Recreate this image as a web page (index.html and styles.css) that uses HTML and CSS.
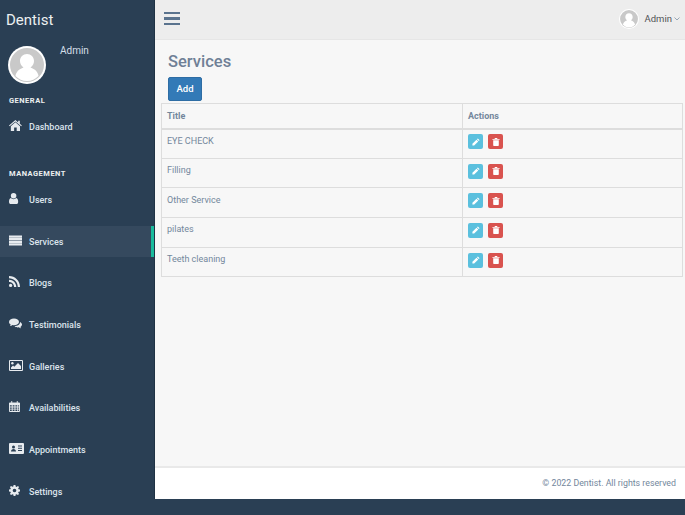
FILE: index.html
```html
<!DOCTYPE html>
<html lang="en">

<head>
    <meta charset="UTF-8">
    <title>Services</title>
    <link rel="stylesheet" href="styles.css">
</head>

<body>
    <svg class="defs" width="0" height="0">
        <symbol id="i-avatar" viewBox="0 0 38 38">
            <circle cx="19" cy="19" r="19" fill="#fff" />
            <circle cx="19" cy="19" r="17" fill="#c9c9c9" />
            <path fill="#fff" d="M19 8c-4 0-7 3-7 7 0 3 1.500 5 3.500 6.500C11 23 8 26 7.500 30 10.500 33 14.500 35 19 35s8.500-2 11.500-5C30 26 27 23 22.500 21.500 24.500 20 26 18 26 15c0-4-3-7-7-7z" />
        </symbol>
        <symbol id="i-home" viewBox="0 0 14 12" preserveAspectRatio="xMinYMid meet">
            <path d="M7 0 0 6l.7.8L7 1.500l6.300 5.300L14 6l-2.200-1.900V.7h-1.800v1.900z" />
            <path d="M7 2.500 2 6.700V12h3.600V8.300h2.800V12H12V6.700z" />
        </symbol>
        <symbol id="i-user" viewBox="0 0 10 12" preserveAspectRatio="xMinYMid meet">
            <circle cx="5" cy="3" r="3" />
            <path d="M2 5.500C.7 6 0 7.500 0 9.500 0 11 .8 12 2 12h6c1.200 0 2-1 2-2.500 0-2-.7-3.500-2-4-.8.800-1.800 1.200-3 1.200S2.800 6.300 2 5.500z" />
        </symbol>
        <symbol id="i-bars" viewBox="0 -.5 13 11" preserveAspectRatio="xMinYMid meet">
            <path d="M0 0h13v2.200H0zM0 2.600h13v2.200H0zM0 5.200h13v2.200H0zM0 7.800h13V10H0z" />
        </symbol>
        <symbol id="i-rss" viewBox="0 0 11 11" preserveAspectRatio="xMinYMid meet">
            <circle cx="1.600" cy="9.400" r="1.600" />
            <path d="M0 3.700v2.200c2.900 0 5.100 2.200 5.100 5.100h2.200C7.300 6.900 4.100 3.700 0 3.700z" />
            <path d="M0 0v2.200c4.900 0 8.800 3.900 8.800 8.800H11C11 4.900 6.100 0 0 0z" />
        </symbol>
        <symbol id="i-comments" viewBox="0 -.5 13 11" preserveAspectRatio="xMinYMid meet">
            <path d="M5 0C2.200 0 0 1.500 0 3.400c0 1.100.7 2 1.800 2.700-.2.600-.5 1-.9 1.400 1 0 1.900-.4 2.600-1 .5.100 1 .2 1.500.2 2.800 0 5-1.500 5-3.300S7.800 0 5 0z" />
            <path d="M11 3.500c.1 2.500-2.500 4.100-5.500 4.200.8.800 2 1.200 3.300 1.200.4 0 .8 0 1.100-.1.600.6 1.400.9 2.300 1-.4-.4-.6-.8-.8-1.300.9-.6 1.600-1.400 1.600-2.400 0-1-.8-2-2-2.600z" />
        </symbol>
        <symbol id="i-picture" viewBox="0 0 14 11" preserveAspectRatio="xMinYMid meet">
            <path fill-rule="evenodd" d="M1 0h12a1 1 0 0 1 1 1v9a1 1 0 0 1-1 1H1a1 1 0 0 1-1-1V1a1 1 0 0 1 1-1zm0 1v9h12V1z" />
            <circle cx="3.400" cy="3.200" r="1.200" />
            <path d="M2 9V7.500l2-2 1.300 1.300L9 3l3 3v3z" />
        </symbol>
        <symbol id="i-calendar" viewBox="0 0 12 12" preserveAspectRatio="xMinYMid meet">
            <path fill-rule="evenodd" d="M2.500 0h1v1.500h5V0h1v1.500H11a1 1 0 0 1 1 1V11a1 1 0 0 1-1 1H1a1 1 0 0 1-1-1V2.500a1 1 0 0 1 1-1h1.500zM1 4.500V6h2V4.500zm3 0V6h2V4.500zm3 0V6h2V4.500zm3 0V6h1V4.500zM1 7v1.400h2V7zm3 0v1.400h2V7zm3 0v1.400h2V7zm3 0v1.400h1V7zM1 9.300V11h2V9.300zm3 0V11h2V9.300zm3 0V11h2V9.300zm3 0V11h1V9.300z" />
        </symbol>
        <symbol id="i-card" viewBox="0 0 15 11" preserveAspectRatio="xMinYMid meet">
            <path fill-rule="evenodd" d="M1 0h13a1 1 0 0 1 1 1v9a1 1 0 0 1-1 1H1a1 1 0 0 1-1-1V1a1 1 0 0 1 1-1zm8 2.500v1h4v-1zm0 2.300v1h4v-1zm0 2.300v1h4v-1zM4.500 2.500a1.500 1.500 0 1 0 0 3 1.500 1.500 0 0 0 0-3zM2 8.500h5c0-1.500-1.100-2.500-2.500-2.500S2 7 2 8.500z" />
        </symbol>
        <symbol id="i-cog" viewBox="0 0 12 12" preserveAspectRatio="xMinYMid meet">
            <path fill-rule="evenodd" d="M5 0h2l.3 1.700 1 .4L9.700 1 11 2.300 10 3.700l.4 1L12 5v2l-1.600.3-.4 1 1 1.400L9.700 11l-1.400-1-1 .4L7 12H5l-.3-1.600-1-.4-1.400 1L1 9.700 2 8.300l-.4-1L0 7V5l1.600-.3.4-1L1 2.300 2.300 1l1.400 1 1-.4zM6 4a2 2 0 1 0 0 4 2 2 0 0 0 0-4z" />
        </symbol>
        <symbol id="i-pencil" viewBox="0 0 10 10">
            <path d="M7.300.5 9.500 2.700 8.400 3.800 6.200 1.600zM5.600 2.200 7.800 4.400 2.700 9.500H.5V7.300z" />
        </symbol>
        <symbol id="i-trash" viewBox="0 0 9 10">
            <path d="M3.200 0h2.600l.6 1.200H9v1H0v-1h2.600z" />
            <path d="M1 2.800h7V9a1 1 0 0 1-1 1H2a1 1 0 0 1-1-1z" />
        </symbol>
    </svg>

    <div class="page">
        <aside class="sidebar">
            <div class="brand">Dentist</div>
            <div class="profile">
                <svg class="profile-pic"><use href="#i-avatar" /></svg>
                <span class="profile-name">Admin</span>
            </div>

            <h3 class="menu-title">General</h3>
            <ul class="menu">
                <li class="menu-item"><svg class="menu-icon"><use href="#i-home" /></svg>Dashboard</li>
            </ul>

            <h3 class="menu-title menu-title-second">Management</h3>
            <ul class="menu">
                <li class="menu-item"><svg class="menu-icon"><use href="#i-user" /></svg>Users</li>
                <li class="menu-item active"><svg class="menu-icon"><use href="#i-bars" /></svg>Services</li>
                <li class="menu-item"><svg class="menu-icon"><use href="#i-rss" /></svg>Blogs</li>
                <li class="menu-item"><svg class="menu-icon"><use href="#i-comments" /></svg>Testimonials</li>
                <li class="menu-item"><svg class="menu-icon"><use href="#i-picture" /></svg>Galleries</li>
                <li class="menu-item"><svg class="menu-icon"><use href="#i-calendar" /></svg>Availabilities</li>
                <li class="menu-item"><svg class="menu-icon"><use href="#i-card" /></svg>Appointments</li>
                <li class="menu-item"><svg class="menu-icon"><use href="#i-cog" /></svg>Settings</li>
            </ul>
        </aside>

        <div class="main">
            <header class="topbar">
                <div class="toggle">
                    <span></span>
                    <span></span>
                    <span></span>
                </div>
                <div class="user-menu">
                    <svg class="user-pic"><use href="#i-avatar" /></svg>
                    <span>Admin</span>
                    <svg class="caret" viewBox="0 0 6 4"><path d="M.5.500 3 3 5.500.5" /></svg>
                </div>
            </header>

            <main class="content">
                <h1 class="page-title">Services</h1>
                <a class="btn-add" href="javascript:;">Add</a>
                <table class="table">
                    <thead>
                        <tr>
                            <th class="col-title">Title</th>
                            <th>Actions</th>
                        </tr>
                    </thead>
                    <tbody>
                        <tr>
                            <td>EYE CHECK</td>
                            <td class="actions">
                                <a class="btn-icon btn-edit" href="javascript:;"><svg><use href="#i-pencil" /></svg></a>
                                <a class="btn-icon btn-delete" href="javascript:;"><svg><use href="#i-trash" /></svg></a>
                            </td>
                        </tr>
                        <tr>
                            <td>Filling</td>
                            <td class="actions">
                                <a class="btn-icon btn-edit" href="javascript:;"><svg><use href="#i-pencil" /></svg></a>
                                <a class="btn-icon btn-delete" href="javascript:;"><svg><use href="#i-trash" /></svg></a>
                            </td>
                        </tr>
                        <tr>
                            <td>Other Service</td>
                            <td class="actions">
                                <a class="btn-icon btn-edit" href="javascript:;"><svg><use href="#i-pencil" /></svg></a>
                                <a class="btn-icon btn-delete" href="javascript:;"><svg><use href="#i-trash" /></svg></a>
                            </td>
                        </tr>
                        <tr>
                            <td>pilates</td>
                            <td class="actions">
                                <a class="btn-icon btn-edit" href="javascript:;"><svg><use href="#i-pencil" /></svg></a>
                                <a class="btn-icon btn-delete" href="javascript:;"><svg><use href="#i-trash" /></svg></a>
                            </td>
                        </tr>
                        <tr>
                            <td>Teeth cleaning</td>
                            <td class="actions">
                                <a class="btn-icon btn-edit" href="javascript:;"><svg><use href="#i-pencil" /></svg></a>
                                <a class="btn-icon btn-delete" href="javascript:;"><svg><use href="#i-trash" /></svg></a>
                            </td>
                        </tr>
                    </tbody>
                </table>
            </main>

            <footer class="footer">© 2022 Dentist. All rights reserved</footer>
        </div>
    </div>
</body>

</html>
```

FILE: styles.css
```css
* {
    margin: 0;
    padding: 0;
    box-sizing: border-box;
}

html,
body {
    height: 515px;
    overflow: hidden;
}

body {
    background-color: #2a3f54;
    font-family: Roboto, "Liberation Sans", sans-serif;
    font-size: 10px;
    color: #73879c;
}

a {
    text-decoration: none;
}

ul {
    list-style: none;
}

.defs {
    position: absolute;
}

.page {
    display: flex;
    height: 515px;
}

/* 侧边栏 */
.sidebar {
    width: 154px;
    flex-shrink: 0;
    padding-top: 11px;
    color: #ecf0f1;
}

.brand {
    padding-left: 6px;
    height: 35px;
    font-size: 15px;
    line-height: 18px;
}

.profile {
    display: flex;
    padding-left: 8px;
    height: 48px;
}

.profile-pic {
    width: 38px;
    height: 38px;
}

.profile-name {
    margin: -2px 0 0 14px;
    font-size: 10px;
    line-height: 14px;
    color: #d5dfe9;
}

.menu-title {
    padding-left: 9px;
    height: 14px;
    font-size: 7.500px;
    line-height: 14px;
    font-weight: 700;
    letter-spacing: .5px;
    text-transform: uppercase;
}

.menu-title-second {
    margin-top: 25px;
}

.menu {
    margin-top: 3px;
}

.menu-item {
    display: flex;
    align-items: center;
    height: 31px;
    margin-bottom: 10.700px;
    padding: 1px 0 0 9px;
    font-size: 9px;
    font-weight: 500;
    color: #dce4ec;
}

.menu-icon {
    width: 15px;
    height: 11px;
    margin: -3px 5px 0 0;
    fill: #e7ebef;
}

.active {
    background-color: #35495e;
    border-right: 3px solid #1abb9c;
}

/* 顶部栏 */
.main {
    flex: 1;
    display: flex;
    flex-direction: column;
    height: 499px;
    min-width: 0;
    background-color: #f7f7f7;
    border-left: 1px solid #1f3244;
}

.topbar {
    display: flex;
    align-items: center;
    justify-content: space-between;
    height: 40px;
    padding: 0 5px 2px 9px;
    background-color: #ededed;
    border-bottom: 1px solid #e6e6e6;
}

.toggle {
    display: flex;
    flex-direction: column;
    gap: 3px;
    width: 16px;
}

.toggle span {
    height: 2.500px;
    background-color: #5a738e;
}

.user-menu {
    display: flex;
    align-items: center;
    font-size: 9.500px;
    color: #515356;
}

.user-pic {
    width: 20px;
    height: 20px;
    margin-right: 6px;
}

.caret {
    width: 6px;
    height: 4px;
    margin-left: 2px;
    fill: none;
    stroke: #73879c;
    stroke-width: .7;
}

/* 内容区 */
.content {
    flex: 1;
    padding: 12px 2px 0 6px;
}

.page-title {
    margin-left: 7px;
    height: 25px;
    font-size: 16.500px;
    line-height: 20px;
    font-weight: 500;
    color: #6f8096;
}

.btn-add {
    display: block;
    margin-left: 7px;
    width: 34px;
    height: 24px;
    background-color: #337ab7;
    border: 1px solid #2e6da4;
    border-radius: 2px;
    text-align: center;
    line-height: 22px;
    font-weight: 500;
    font-size: 9.500px;
    color: #fff;
}

.table {
    width: 100%;
    margin-top: 2px;
    border-collapse: collapse;
    table-layout: fixed;
    font-size: 9px;
}

.table th,
.table td {
    border: 1px solid #dddddd;
    padding-left: 5px;
    text-align: left;
}

.table th {
    height: 25px;
    border-bottom-width: 2px;
    font-weight: 700;
}

.table td {
    height: 29.700px;
    padding-bottom: 6px;
}

.col-title {
    width: 301px;
}

.table .actions {
    padding: 0 0 4px 5px;
    font-size: 0;
}

.btn-icon {
    display: inline-flex;
    align-items: center;
    justify-content: center;
    width: 15px;
    height: 15px;
    margin-right: 5px;
    vertical-align: middle;
    border-radius: 2px;
    fill: #fff;
}

.btn-icon svg {
    width: 8px;
    height: 8px;
}

.btn-edit {
    background-color: #5bc0de;
}

.btn-delete {
    background-color: #d9534f;
}

/* 页脚 */
.footer {
    height: 33px;
    padding: 0 9px 0 0;
    background-color: #fff;
    border-top: 2px solid #e9e9e9;
    text-align: right;
    line-height: 30px;
    font-size: 8.800px;
}
```
